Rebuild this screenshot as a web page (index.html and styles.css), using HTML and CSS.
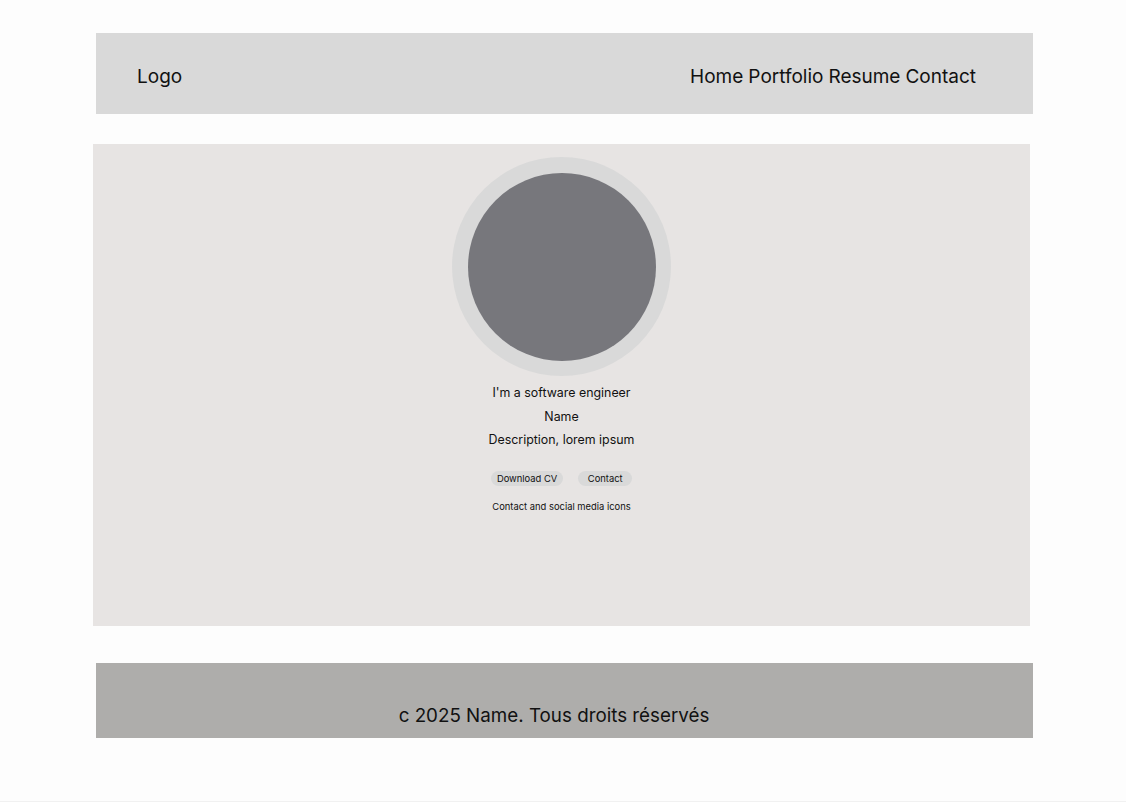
FILE: index.html
```html
<!DOCTYPE html>
<html lang="fr">
<head>
<meta charset="utf-8">
<title>Portfolio</title>
<link rel="stylesheet" href="styles.css">
</head>
<body>
<div class="page">
  <header class="site-header">
    <div class="logo">Logo</div>
    <nav class="nav">
      <a href="#">Home</a>
      <a href="#">Portfolio</a>
      <a href="#">Resume</a>
      <a href="#">Contact</a>
    </nav>
  </header>

  <section class="hero">
    <div class="avatar-ring"><div class="avatar"></div></div>
    <p class="line">I'm a software engineer</p>
    <p class="line">Name</p>
    <p class="line">Description, lorem ipsum</p>
    <div class="actions">
      <a class="pill" href="#">Download CV</a>
      <a class="pill" href="#">Contact</a>
    </div>
    <p class="social">Contact and social media icons</p>
  </section>

  <footer class="site-footer">
    <p>c 2025 Name. Tous droits réservés</p>
  </footer>
</div>
</body>
</html>
```

FILE: styles.css
```css
html, body {
  margin: 0;
  padding: 0;
}
body {
  background: #fdfdfd;
  font-family: Inter, "Noto Sans", sans-serif;
  color: #111;
  height: 802px;
  border-bottom: 1px solid #f1f1f1;
  box-sizing: border-box;
}
.page {
  padding-top: 33px;
  display: flex;
  flex-direction: column;
}
.site-header {
  margin-left: 96px;
  width: 937px;
  height: 81px;
  box-sizing: border-box;
  background: #d9d9d9;
  display: flex;
  justify-content: space-between;
  align-items: flex-start;
  padding: 32px 57px 0 41px;
  font-size: 19px;
  line-height: 24px;
}
.nav {
  display: flex;
  gap: 5px;
}
.nav a {
  color: #111;
  text-decoration: none;
}
.hero {
  margin-top: 30px;
  margin-left: 93px;
  width: 937px;
  height: 482px;
  box-sizing: border-box;
  background: #e7e4e3;
  display: flex;
  flex-direction: column;
  align-items: center;
  padding-top: 13px;
}
.avatar-ring {
  width: 219px;
  height: 219px;
  border-radius: 50%;
  background: #d9d9d9;
  display: flex;
  align-items: center;
  justify-content: center;
}
.avatar {
  width: 188px;
  height: 188px;
  border-radius: 50%;
  background: #77777c;
}
.line {
  margin: 0;
  font-size: 12.4px;
  line-height: 23.5px;
}
.avatar-ring + .line {
  margin-top: 5px;
}
.actions {
  margin-top: 19px;
  display: flex;
  gap: 15px;
}
.pill {
  display: inline-block;
  height: 15px;
  line-height: 15px;
  padding: 0 6px;
  border-radius: 8px;
  background: #d9d9d9;
  color: #111;
  font-size: 9.4px;
  text-decoration: none;
}
.pill + .pill {
  padding: 0 9.5px;
}
.social {
  margin: 14px 0 0;
  font-size: 9.4px;
  line-height: 14px;
}
.site-footer {
  margin-top: 37px;
  margin-left: 96px;
  width: 937px;
  height: 75px;
  box-sizing: border-box;
  background: #aeadab;
  padding: 41px 21px 0 0;
  text-align: center;
  font-size: 18.8px;
  line-height: 24px;
}
.site-footer p {
  margin: 0;
}
```
